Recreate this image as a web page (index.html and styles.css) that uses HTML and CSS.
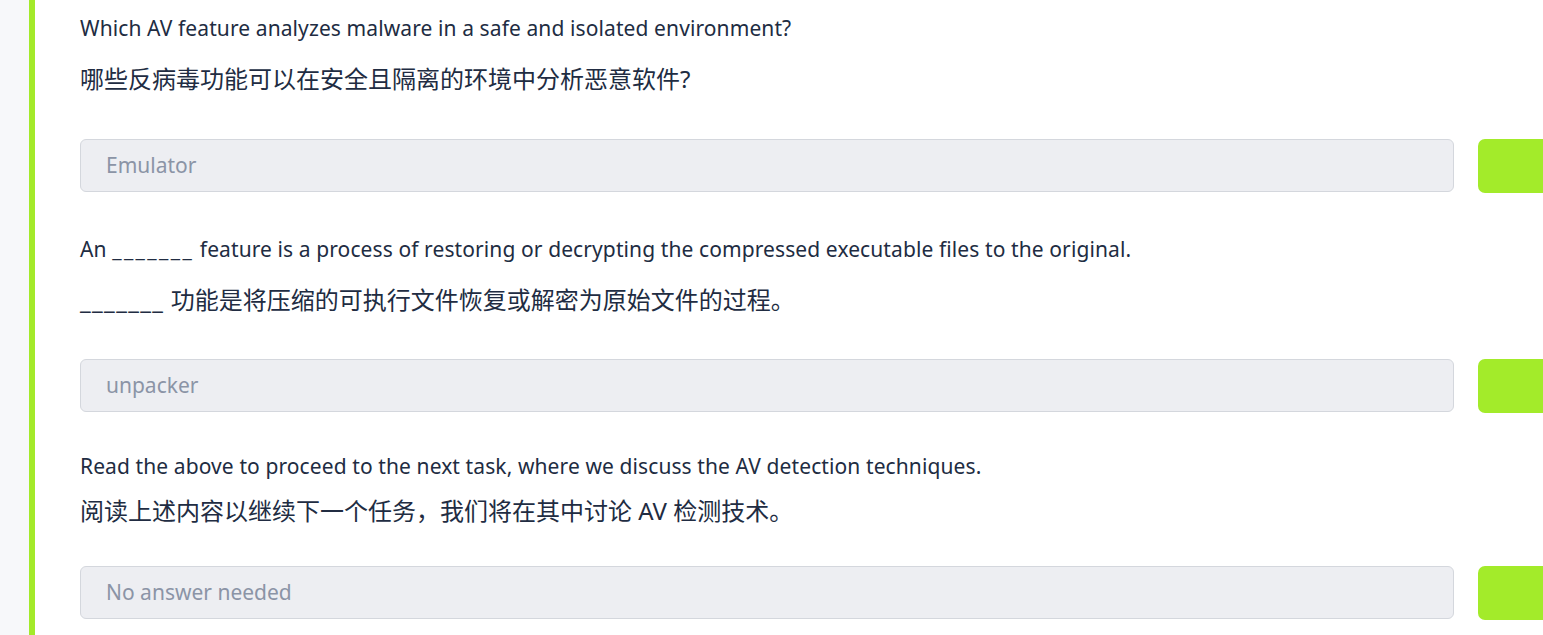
FILE: index.html
```html
<!DOCTYPE html>
<html lang="en">
<head>
<meta charset="utf-8">
<title>Tasks</title>
<link rel="stylesheet" href="styles.css">
</head>
<body>
<div class="page">
  <div class="strip"></div>
  <div class="bar"></div>
  <main class="content">
    <section class="task task-1">
      <p class="q">Which AV feature analyzes malware in a safe and isolated environment?</p>
      <p class="qcn">哪些反病毒功能可以在安全且隔离的环境中分析恶意软件?</p>
      <div class="answer-row">
        <div class="answer">Emulator</div>
        <div class="submit"></div>
      </div>
    </section>
    <section class="task task-2">
      <p class="q">An <span class="blank">_______</span> feature is a process of restoring or decrypting the compressed executable files to the original.</p>
      <p class="qcn"><span class="blank-cn">_______</span> 功能是将压缩的可执行文件恢复或解密为原始文件的过程。</p>
      <div class="answer-row">
        <div class="answer">unpacker</div>
        <div class="submit"></div>
      </div>
    </section>
    <section class="task task-3">
      <p class="q">Read the above to proceed to the next task, where we discuss the AV detection techniques.</p>
      <p class="qcn">阅读上述内容以继续下一个任务，我们将在其中讨论 AV 检测技术。</p>
      <div class="answer-row">
        <div class="answer">No answer needed</div>
        <div class="submit"></div>
      </div>
    </section>
  </main>
</div>
</body>
</html>
```
FILE: styles.css
```css
html, body {
  margin: 0;
  padding: 0;
  background: #ffffff;
  overflow: hidden;
}

.page {
  display: flex;
  width: 1543px;
  height: 635px;
  overflow: hidden;
  font-family: "Noto Sans", "Noto Sans CJK SC", sans-serif;
  color: #212c42;
}

.strip {
  flex: 0 0 29px;
  background: #f7f8fa;
}

.bar {
  flex: 0 0 6px;
  background: #a3ea2a;
}

.content {
  flex: 1;
  padding-left: 45px;
  min-width: 0;
}

.task p {
  margin: 0;
}

.q {
  font-size: 21px;
  line-height: 30px;
  letter-spacing: 0.1px;
}

.blank {
  letter-spacing: 2.4px;
}

.qcn {
  font-family: "Noto Sans", "Noto Sans CJK SC", sans-serif;
  font-size: 24px;
  line-height: 34px;
  margin-top: 19px !important;
}

.blank-cn {
  letter-spacing: 1.4px;
}

.task-1 {
  padding-top: 13px;
}

.answer-row {
  display: flex;
  gap: 24px;
  margin-top: 43px;
}

.task-2 {
  margin-top: 41px;
}

.task-2 .answer-row {
  margin-top: 42px;
}

.task-3 {
  margin-top: 38px;
}

.task-3 .qcn {
  margin-top: 13px !important;
}

.task-3 .answer-row {
  margin-top: 38px;
}

.answer {
  flex: 0 0 1374px;
  box-sizing: border-box;
  height: 53px;
  border: 1px solid #d4d7dd;
  border-radius: 6px;
  background: #edeef2;
  padding-left: 25px;
  padding-bottom: 2px;
  display: flex;
  align-items: center;
  font-size: 21px;
  color: #8b94a6;
}

.submit {
  flex: 0 0 100px;
  height: 54px;
  border-radius: 7px;
  background: #a3eb2a;
}
```
